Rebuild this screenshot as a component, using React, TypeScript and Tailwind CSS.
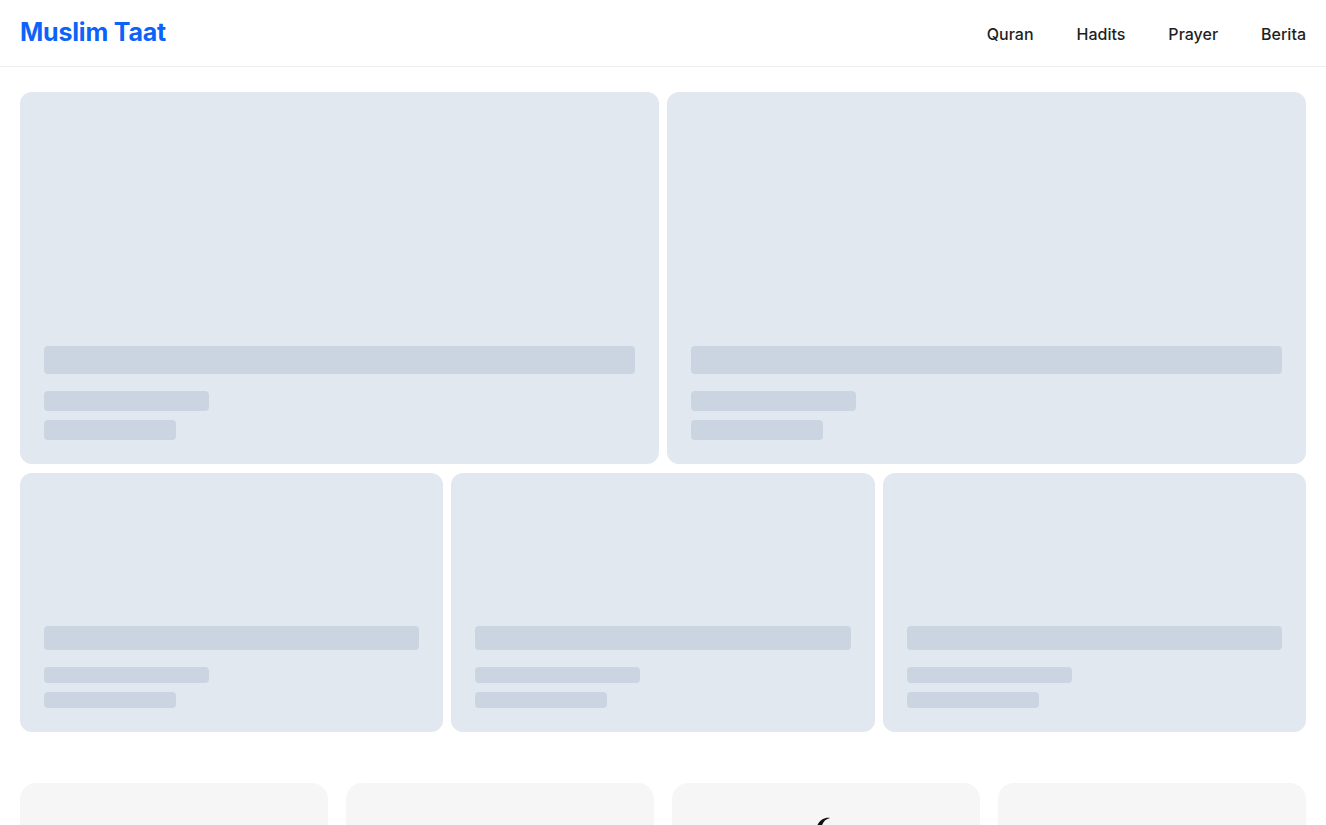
import { memo } from "react";

function BigSkeleton() {
  return (
    <div className="h-[372px] rounded-xl bg-[#e2e8f0] p-6 flex flex-col justify-end">
      <div className="h-7 w-full rounded bg-[#cbd5e1]" />
      <div className="mt-[17px] h-5 w-[165px] rounded bg-[#cbd5e1]" />
      <div className="mt-[9px] h-5 w-[132px] rounded bg-[#cbd5e1]" />
    </div>
  );
}

function SmallSkeleton() {
  return (
    <div className="h-[259px] rounded-xl bg-[#e2e8f0] p-6 flex flex-col justify-end">
      <div className="h-6 w-full rounded bg-[#cbd5e1]" />
      <div className="mt-[17px] h-4 w-[165px] rounded bg-[#cbd5e1]" />
      <div className="mt-[9px] h-4 w-[132px] rounded bg-[#cbd5e1]" />
    </div>
  );
}

function App() {
  const menu = ["Quran", "Hadits", "Prayer", "Berita"];

  return (
    <div className="min-h-screen bg-white font-['Inter',sans-serif] overflow-hidden h-[825px]">
      <header className="h-[67px] border-b border-[#ececec] px-5 flex items-center justify-between">
        <h1 className="text-[25px] font-bold text-[#0d63f8] tracking-[-0.2px]">
          Muslim Taat
        </h1>
        <nav className="flex items-center gap-[43px] pt-[2px]">
          {menu.map((m) => (
            <a key={m} href="#" className="text-[16px] font-medium text-[#1f1f1f]">
              {m}
            </a>
          ))}
        </nav>
      </header>

      <main className="px-5 pt-[25px]">
        <div className="grid grid-cols-2 gap-2">
          <BigSkeleton />
          <BigSkeleton />
        </div>
        <div className="grid grid-cols-3 gap-2 mt-[9px]">
          <SmallSkeleton />
          <SmallSkeleton />
          <SmallSkeleton />
        </div>

        <div className="grid grid-cols-4 gap-[18px] mt-[51px]">
          <div className="h-[200px] rounded-2xl bg-[#f6f6f6]" />
          <div className="h-[200px] rounded-2xl bg-[#f6f6f6]" />
          <div className="h-[200px] rounded-2xl bg-[#f6f6f6] flex justify-center pt-8">
            <svg width="60" height="60" viewBox="0 0 60 60" className="ml-[0px]">
              <path
                d="M20 14 C22 6 28 2 34 3 C29 4 26 8 25 14 Z"
                fill="#111"
              />
            </svg>
          </div>
          <div className="h-[200px] rounded-2xl bg-[#f6f6f6]" />
        </div>
      </main>
    </div>
  );
}

export default memo(App);
